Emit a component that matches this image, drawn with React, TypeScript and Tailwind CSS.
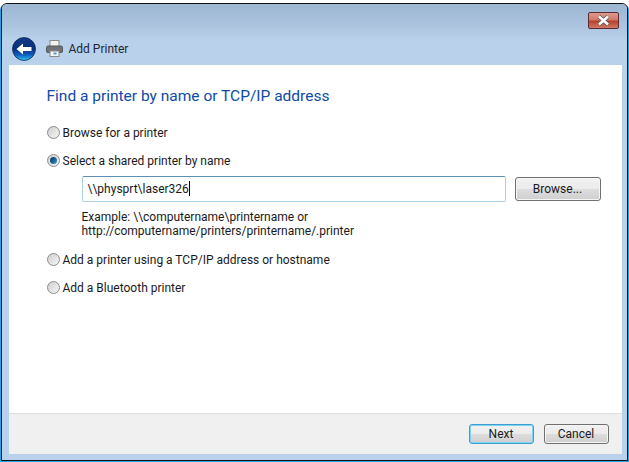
const font = { fontFamily: "Roboto, sans-serif" };

function Radio({ label, checked }: { label: string; checked?: boolean }) {
  return (
    <div className="flex items-center gap-[3px] h-[16px] text-[12px] text-[#1a1a1a]">
      <div className="w-[13px] h-[13px] rounded-full border border-[#8b8b8b] bg-gradient-to-br from-[#cfcfcf] to-[#f6f6f6] flex items-center justify-center">
        {checked && (
          <div className="w-[7px] h-[7px] rounded-full bg-gradient-to-br from-[#0d2f52] to-[#2f9ad6]" />
        )}
      </div>
      <span>{label}</span>
    </div>
  );
}

function Button({ label, focused, className }: { label: string; focused?: boolean; className?: string }) {
  return (
    <div
      className={`flex items-center justify-center rounded-[3px] border text-[12px] text-[#1a1a1a] bg-[linear-gradient(#f2f2f2_0%,#ebebeb_48%,#dddddd_52%,#cfcfcf_100%)] ${
        focused ? "border-[#3c9fd0] shadow-[inset_0_0_0_1px_#7fd3f2]" : "border-[#707070] shadow-[inset_0_0_0_1px_#f6f6f6]"
      } ${className ?? ""}`}
    >
      {label}
    </div>
  );
}

export default function App() {
  return (
    <div className="w-[629px] h-[462px] bg-white pt-[3px] pl-px overflow-hidden" style={font}>
      <div className="w-[627px] h-[458px] border-[1.5px] border-[#111] rounded-t-[6px] flex flex-col bg-[#b9d1ea] shadow-[-1px_1px_0_#1ea7e8,1px_1px_0_#1ea7e8]">
        {/* title bar */}
        <div className="h-[60.5px] shrink-0 flex flex-col rounded-t-[5px] bg-[linear-gradient(#9db6d2_0%,#a9c1dc_30%,#b9d1ea_60%)] pl-[8.5px] pr-[6.5px]">
          <div className="h-[29px] flex justify-end pt-[8px] pr-[2px]">
            <div className="w-[31px] h-[17px] rounded-[2px] border border-[#5a2b33] bg-[linear-gradient(#dd9a8c_0%,#d3796a_45%,#b8412e_55%,#cf7a66_100%)] flex items-center justify-center">
              <svg width="15" height="11" viewBox="0 0 15 11">
                <path d="M3 1.5 L12 9.5 M12 1.5 L3 9.5" stroke="#555" strokeWidth="4" />
                <path d="M3 1.5 L12 9.5 M12 1.5 L3 9.5" stroke="#fff" strokeWidth="2.6" />
              </svg>
            </div>
          </div>
          <div className="flex items-center h-[31px]">
            <svg width="26" height="26" viewBox="0 0 26 26">
              <defs>
                <linearGradient id="back" x1="0" y1="0" x2="0" y2="1">
                  <stop offset="0" stopColor="#123a86" />
                  <stop offset="0.5" stopColor="#0a2f7c" />
                  <stop offset="0.75" stopColor="#0f5cc0" />
                  <stop offset="1" stopColor="#35c4f2" />
                </linearGradient>
              </defs>
              <circle cx="13" cy="13" r="12.5" fill="#c7d6e8" />
              <circle cx="13" cy="13" r="11.5" fill="url(#back)" stroke="#0b2a5c" strokeWidth="0.8" />
              <path d="M5.5 13 L12 7.5 V11 H20.5 V15 H12 V18.5 Z" fill="#fff" />
            </svg>
            <svg className="ml-[9px]" width="17" height="17" viewBox="0 0 17 17">
              <rect x="4" y="0.5" width="9" height="6" fill="#f2f2f2" stroke="#8a8a8a" />
              <rect x="0.5" y="6" width="16" height="6.5" rx="1.5" fill="#6e7378" stroke="#55595d" />
              <rect x="4" y="11" width="9" height="5.5" fill="#f5f5f5" stroke="#8a8a8a" />
              <rect x="7.5" y="12.5" width="3" height="2" fill="#4d9bd6" />
            </svg>
            <span className="ml-[6px] text-[12px] text-[#1d2733]">Add Printer</span>
          </div>
        </div>

        {/* wizard body */}
        <div className="ml-[6.5px] mr-[5.5px] mb-[6.5px] flex-1 flex flex-col bg-white">
          <div className="flex-1 pl-[38px] pr-[20px] pt-[21px]">
            <h1 className="text-[15.5px] leading-[20px] text-[#0f4aa6]">Find a printer by name or TCP/IP address</h1>
            <div className="mt-[19px]">
              <Radio label="Browse for a printer" />
            </div>
            <div className="mt-[12px]">
              <Radio label="Select a shared printer by name" checked />
            </div>
            <div className="mt-[7px] ml-[35px] flex items-center gap-[9px]">
              <div className="w-[424px] h-[26px] border border-[#abd0e6] border-t-[#5b8fb5] rounded-[2px] flex items-center pl-[5px] text-[12px] text-[#1a1a1a]">
                {"\\\\physprt\\laser326"}
                <span className="w-px h-[15px] bg-black" />
              </div>
              <Button label="Browse..." className="w-[86px] h-[24px]" />
            </div>
            <div className="mt-[8px] ml-[35px] text-[12px] leading-[14px] text-[#1a1a1a]">
              <p>{"Example: \\\\computername\\printername or"}</p>
              <p>http://computername/printers/printername/.printer</p>
            </div>
            <div className="mt-[14px]">
              <Radio label="Add a printer using a TCP/IP address or hostname" />
            </div>
            <div className="mt-[12px]">
              <Radio label="Add a Bluetooth printer" />
            </div>
          </div>
          <div className="h-[41px] shrink-0 border-t border-[#dfdfdf] bg-[#f0f0f0] flex items-center justify-end gap-[10px] pr-[13px]">
            <Button label="Next" focused className="w-[65px] h-[20px]" />
            <Button label="Cancel" className="w-[65px] h-[20px]" />
          </div>
        </div>
      </div>
    </div>
  );
}
